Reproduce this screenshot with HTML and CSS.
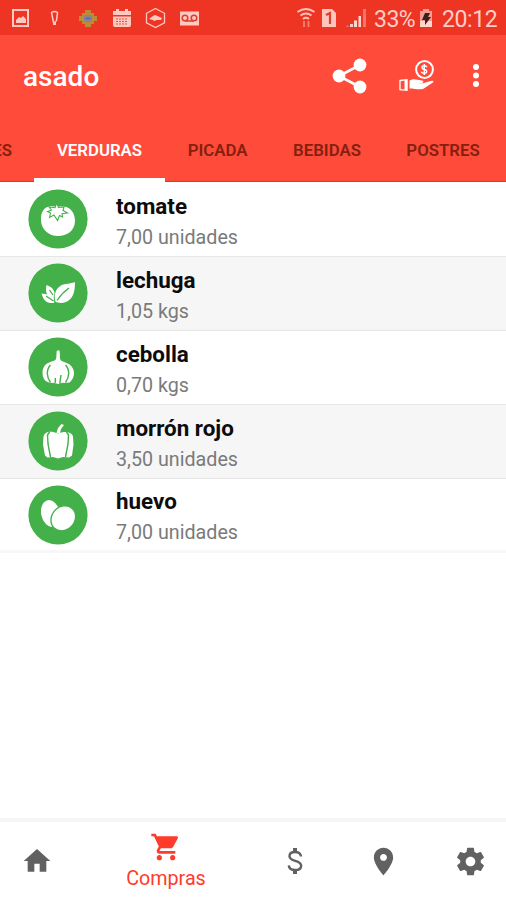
FILE: index.html
```
<!DOCTYPE html>
<html lang="es">
<head>
	<meta charset="UTF-8">
	<title>asado</title>
	<link rel="stylesheet" href="styles.css">
</head>
<body>
	<div class="app">
		<!-- barra de estado -->
		<div class="status">
			<svg class="status-left" width="210" height="35" viewBox="0 0 210 35">
				<g fill="none" stroke="#ffc9c1" stroke-width="2">
					<rect x="13" y="10" width="15" height="16"/>
					<path d="M51.500 12.500q3-2 6 0l-1 8q-1 2-3 2z" stroke-width="1.500"/>
					<path d="M155.500 8.500l9 4.800v9.500l-9 4.800-9-4.800v-9.500z" stroke-width="1.300"/>
				</g>
				<g fill="#ffc9c1">
					<path d="M16 23v-3l3-3 2 1 2-2 3 3v4z"/>
					<path d="M53 22h3v3h-3z"/>
					<path d="M113 11h3v-2h3v2h6v-2h3v2h3v4h-18zM113 16.500h18v8.500q0 2-2 2h-14q-2 0-2-2z"/>
					<path d="M149 19l4-3 2-1 7 3-1 2h-4l-3 1-1-1z"/>
					<rect x="180" y="11.500" width="19" height="14"/>
				</g>
				<path d="M116 19h12M116 21.500h12M116 24h12" stroke="#e8503f" stroke-width="1.200" stroke-dasharray="2 1"/>
				<path d="M85 10h6v3h3v3h3v5h-3v3h-3v3h-6v-3h-3v-3h-3v-5h3v-3h3z" fill="#b98d35"/>
				<rect x="84" y="15" width="8" height="7" rx="2" fill="#8d8290"/>
				<path d="M85.500 18.500h5" stroke="#5369b5" stroke-width="1.500"/>
				<g fill="none" stroke="#e13b2c" stroke-width="1.500">
					<circle cx="185" cy="18" r="2.800"/>
					<circle cx="194" cy="18" r="2.800"/>
					<path d="M185 21h9"/>
				</g>
			</svg>
			<div class="status-right">
				<svg width="72" height="35" viewBox="0 0 72 35">
					<g fill="none" stroke="#ffc4bb" stroke-width="1.800">
						<path d="M1.500 12q8.500-6 17 0M4.500 15.500q5.500-4 11 0M7 19q3-2.500 6 0"/>
						<path d="M8 21v6M12.500 21v6" stroke="#f68171"/>
					</g>
					<path d="M26 9h10l4 4v14h-14z" fill="#ffc4bb"/>
					<path d="M30 15l4-2v11" fill="none" stroke="#d9402f" stroke-width="2.200"/>
					<path d="M54 24h3v3h-3zM58 20.500h3v6.500h-3zM62.500 16h2.500v11h-2.500z" fill="#ffd5ce"/>
					<path d="M50.500 25.500h2v1.500h-2zM67 9h3v18h-3z" fill="#f47767"/>
				</svg>
				<span class="percent">33%</span>
				<svg class="battery" width="14" height="35" viewBox="0 0 14 35">
					<path d="M4 9h6v2h3v16h-12v-16h3z" fill="#f59b8f"/>
					<path d="M1 21h12v6h-12z" fill="#ffd5ce"/>
					<path d="M6 13h5l-2 4h3l-6 8v-5h-3z" fill="#36211e"/>
				</svg>
				<span class="clock">20:12</span>
			</div>
		</div>

		<header class="header">
			<div class="toolbar">
				<h1 class="title">asado</h1>
				<svg class="share" width="36" height="36" viewBox="0 0 36 36" fill="#fff">
					<path d="M28 7L7 18l21 11" fill="none" stroke="#fff" stroke-width="2.600"/>
					<circle cx="28" cy="7" r="6.400"/>
					<circle cx="7" cy="18" r="6.400"/>
					<circle cx="28" cy="29" r="6.400"/>
				</svg>
				<svg class="pay" width="36" height="32" viewBox="0 0 36 32">
					<circle cx="25.500" cy="9.500" r="8.400" fill="none" stroke="#fff" stroke-width="2"/>
					<path d="M28 7q-1-1.500-3-1.300c-3 .3-2.500 3.100 0 3.600 3.500.7 3.500 3.700.3 4-1.500.1-2.500-.4-3-1.500M25.300 4v11" fill="none" stroke="#fff" stroke-width="1.400"/>
					<path d="M1 20.500l7-.8v10.600l-7-.6z" fill="none" stroke="#fff" stroke-width="1.300"/>
					<path d="M5.500 20h2.700v10h-2.700z" fill="#fff"/>
					<path d="M10.500 20.500c3-1.500 5-1.800 8-.7l4.500.7c2 .4 1.800 2.300-.2 2.400h-4.300l5.500.4 8.500-2.500c2-.5 2.600 1 1 2l-7.500 5c-1.500 1-3 1.500-5 1.500-4 0-7-.8-10.500-.8z" fill="#fff"/>
				</svg>
				<svg class="more" width="10" height="26" viewBox="0 0 10 26" fill="#fff">
					<circle cx="5" cy="4" r="3"/>
					<circle cx="5" cy="12.500" r="3"/>
					<circle cx="5" cy="21" r="3"/>
				</svg>
			</div>
			<nav class="tabs">
				<div class="tab tab-prev">ES</div>
				<div class="tab tab-verduras active">VERDURAS</div>
				<div class="tab tab-picada">PICADA</div>
				<div class="tab tab-bebidas">BEBIDAS</div>
				<div class="tab tab-postres">POSTRES</div>
			</nav>
		</header>

		<main class="list">
			<div class="item">
				<svg class="icon" viewBox="0 0 60 60">
					<circle cx="30" cy="30" r="29.600" fill="#43b04a"/>
					<path d="M26 17.500c-9-1.500-13.500 4.500-13 14 .5 9.500 8 15.500 17 15.500s17-5 17-15.500c0-9-6-15-14-14z" fill="#fff"/>
					<path d="M21 18l6 .7 1.500-4.700 2 4.500 5.500-.5-1 3.500 4.500 2.500-5.500.8.500 3.200-3-1.500-2 5-3.500-5.500-4.500 2.500 1-4.500-3-1.500 4-1.500z" fill="#fff" stroke="#43b04a" stroke-width="1.100"/>
				</svg>
				<div class="text">
					<div class="name">tomate</div>
					<div class="amount">7,00 unidades</div>
				</div>
			</div>
			<div class="item gray">
				<svg class="icon" viewBox="0 0 60 60">
					<circle cx="30" cy="30" r="29.600" fill="#43b04a"/>
					<path d="M47 19c0 10-2 17-9 20-4 1.500-8 1-10.500-.2-2-6-.3-13 5.500-16.300 4-2.300 9-1.500 14-3.500z" fill="#fff"/>
					<path d="M18.500 22c4.500 1.500 8 4.500 8 8.500l-.8 3.500.5 6h-3.700c-4.500 0-7.500-4-9-9.500l5.500.8c-1.300-3-1.200-6-.5-9.300z" fill="#fff"/>
					<path d="M29 37.500c4-6 7-9 12-12.500M25.500 38l-7.500-5M25 32l-3.500-5" fill="none" stroke="#43b04a" stroke-width="1.300"/>
				</svg>
				<div class="text">
					<div class="name">lechuga</div>
					<div class="amount">1,05 kgs</div>
				</div>
			</div>
			<div class="item">
				<svg class="icon" viewBox="0 0 60 60">
					<circle cx="30" cy="30" r="29.600" fill="#43b04a"/>
					<path d="M28.700 14q1.500-1.500 3 0l.3 7.500c.5 2.500 2.500 3 5.500 4 5 1.500 8.500 5.500 8.500 10.500 0 4-2 7.500-4.500 9.500l-4.500.5-2.500-.3-4 1.300-4.500-1-4-.3c-5-.8-7.500-4.500-7.500-10 0-6 3.500-9.500 8.500-11 3-1 5-1.500 5.200-3.800z" fill="#fff"/>
					<path d="M22.500 28c-4.500 5-4 12 0 17.500M27 46c.5-1.500.6-3 .3-5M32 47c-.3-3 .5-5 1-9M37.500 28c4.500 5 4 12 0 17.500" fill="none" stroke="#43b04a" stroke-width="1.400"/>
				</svg>
				<div class="text">
					<div class="name">cebolla</div>
					<div class="amount">0,70 kgs</div>
				</div>
			</div>
			<div class="item gray">
				<svg class="icon" viewBox="0 0 60 60">
					<circle cx="30" cy="30" r="29.600" fill="#43b04a"/>
					<path d="M28.500 22l1.500-5 3.500-4 2.500 1-3 4-1 4z" fill="#fff"/>
					<path d="M30 22.500c7-3 14-1.500 15 3l.5 8-1.500 11-3 2-6-.5-5 1.500-5-1.500-5.500.5-2.500-2-2-11 .5-8c1-5 7-6 14.500-3z" fill="#fff"/>
					<path d="M21.500 21l-2 3 .5 9 2.500 13M38.500 21l2 3-.5 9-2.500 13" fill="none" stroke="#43b04a" stroke-width="1.400"/>
				</svg>
				<div class="text">
					<div class="name">morrón rojo</div>
					<div class="amount">3,50 unidades</div>
				</div>
			</div>
			<div class="item">
				<svg class="icon" viewBox="0 0 60 60">
					<circle cx="30" cy="30" r="29.600" fill="#43b04a"/>
					<ellipse cx="22.500" cy="28.500" rx="9.300" ry="13.600" transform="rotate(-12 22.500 28.500)" fill="#fff"/>
					<ellipse cx="35.300" cy="33.300" rx="13.300" ry="11.500" transform="rotate(-48 35.300 33.300)" fill="#fff" stroke="#43b04a" stroke-width="1.400"/>
				</svg>
				<div class="text">
					<div class="name">huevo</div>
					<div class="amount">7,00 unidades</div>
				</div>
			</div>
		</main>

		<!-- menu inferior -->
		<nav class="bottom">
			<div class="link">
				<svg width="32" height="32" viewBox="0 0 24 24"><path d="M10 20v-6h4v6h5v-8h3L12 3 2 12h3v8z"/></svg>
			</div>
			<div class="link selected">
				<svg width="32" height="32" viewBox="0 0 24 24"><path d="M7 18c-1.100 0-1.990.9-1.990 2S5.900 22 7 22s2-.9 2-2-.9-2-2-2zM1 2v2h2l3.600 7.590-1.350 2.450c-.16.28-.25.61-.25.96 0 1.100.9 2 2 2h12v-2H7.420c-.14 0-.25-.11-.25-.25l.03-.12.9-1.630h7.450c.75 0 1.410-.41 1.750-1.030l3.580-6.490c.08-.14.12-.31.12-.48 0-.55-.45-1-1-1H5.210l-.94-2H1zm16 16c-1.100 0-1.990.9-1.990 2s.89 2 1.990 2 2-.9 2-2-.9-2-2-2z"/></svg>
				<span>Compras</span>
			</div>
			<div class="link">
				<svg width="32" height="32" viewBox="0 0 32 32"><path d="M22 11.500c-.3-3-2.500-4.500-6-4.500-3.300 0-5.500 1.500-5.500 4.200 0 6 11.700 3.200 11.700 9.500 0 2.700-2.500 4.300-6 4.300-3.700 0-6.200-1.600-6.400-4.700" fill="none" stroke="#616161" stroke-width="2.400"/><path d="M14 3h4v4h-4zM14 25h4v4h-4z"/></svg>
			</div>
			<div class="link">
				<svg width="33" height="33" viewBox="0 0 24 24"><path d="M12 2C8.130 2 5 5.130 5 9c0 5.250 7 13 7 13s7-7.750 7-13c0-3.870-3.130-7-7-7zm0 9.500c-1.380 0-2.500-1.120-2.500-2.500s1.120-2.500 2.500-2.500 2.500 1.120 2.500 2.500-1.120 2.500-2.500 2.500z"/></svg>
			</div>
			<div class="link link-settings">
				<svg width="33" height="33" viewBox="0 0 24 24"><path d="M19.430 12.980c.04-.32.07-.64.07-.98s-.03-.66-.07-.98l2.110-1.650c.19-.15.24-.42.12-.64l-2-3.460c-.12-.22-.39-.3-.61-.22l-2.490 1c-.52-.4-1.080-.73-1.690-.98l-.38-2.650C14.460 2.180 14.250 2 14 2h-4c-.25 0-.46.18-.49.42l-.38 2.650c-.61.25-1.170.59-1.690.98l-2.490-1c-.23-.09-.49 0-.61.22l-2 3.460c-.13.22-.07.49.12.64l2.110 1.650c-.04.32-.07.65-.07.98s.03.66.07.98l-2.110 1.650c-.19.15-.24.42-.12.64l2 3.460c.12.22.39.3.61.22l2.490-1c.52.4 1.080.73 1.690.98l.38 2.650c.03.24.24.42.49.42h4c.25 0 .46-.18.49-.42l.38-2.650c.61-.25 1.170-.59 1.690-.98l2.490 1c.23.09.49 0 .61-.22l2-3.460c.12-.22.07-.49-.12-.64l-2.110-1.650zM12 15.500c-1.930 0-3.500-1.570-3.500-3.500s1.570-3.500 3.500-3.500 3.500 1.570 3.500 3.500-1.570 3.500-3.500 3.500z"/></svg>
			</div>
		</nav>
	</div>
</body>
</html>
```

FILE: styles.css
```
*{
	box-sizing: border-box;
}
body{
	margin: 0;
	font-family: Roboto, "Liberation Sans", sans-serif;
	background: #fff;
}
svg{
	display: block;
	flex: none;
}
.app{
	display: flex;
	flex-direction: column;
	width: 506px;
	height: 900px;
	overflow: hidden;
}

/* barra de estado */
.status{
	display: flex;
	justify-content: space-between;
	height: 35px;
	flex: none;
	background: #ee3524;
	color: #ffcec7;
}
.status-right{
	display: flex;
	width: 210px;
	line-height: 39px;
	font-size: 23px;
}
.percent{
	width: 44px;
	margin-left: 6px;
	letter-spacing: -0.5px;
}
.battery{
	margin-left: 1px;
	margin-right: 9px;
}
.clock{
	letter-spacing: -0.4px;
}

/* cabecera */
.header{
	height: 147px;
	flex: none;
	background: #ff4b39;
	border-bottom: 1px solid #f0301b;
}
.toolbar{
	display: flex;
	align-items: center;
	height: 81px;
	padding-left: 23px;
}
.title{
	width: 309px;
	margin: 0;
	padding-top: 2px;
	font-size: 28px;
	font-weight: 500;
	color: #fff;
}
.pay{
	margin-left: 31px;
}
.more{
	margin-left: 36px;
}
.tabs{
	display: flex;
	height: 66px;
}
.tab{
	display: flex;
	justify-content: center;
	flex: none;
	height: 66px;
	padding-top: 24px;
	line-height: 20px;
	font-size: 16.800px;
	font-weight: 600;
	color: #84200f;
}
.tab-prev{
	width: 34px;
	justify-content: flex-end;
	padding-right: 22px;
}
.tab-verduras{
	width: 131px;
}
.tab-picada{
	width: 105px;
}
.tab-bebidas{
	width: 114px;
}
.tab-postres{
	width: 118px;
}
.active{
	color: #fff;
	border-bottom: 4px solid #fff;
}

/* lista de compras */
.list{
	flex: 1;
	padding-top: 1px;
}
.item{
	display: flex;
	align-items: center;
	height: 74px;
	padding-left: 28px;
	padding-bottom: 1px;
	border-bottom: 1px solid #e6e6e6;
}
.item:last-child{
	padding-bottom: 0;
	border-bottom: 3px solid #f7f7f7;
}
.gray{
	background: #f6f6f6;
}
.icon{
	width: 60px;
	height: 60px;
}
.text{
	margin-left: 28px;
	padding-top: 5px;
}
.name{
	height: 32px;
	line-height: 28px;
	font-size: 22.400px;
	font-weight: 700;
	color: #0c0c0c;
}
.amount{
	line-height: 28px;
	font-size: 19.700px;
	color: #7a7a7a;
}

/* menu inferior */
.bottom{
	display: flex;
	height: 82px;
	flex: none;
	margin: 0 -9px 0 -7px;
	border-top: 4px solid #f6f6f6;
}
.link{
	display: flex;
	flex-direction: column;
	align-items: center;
	justify-content: center;
	width: 88px;
	fill: #616161;
}
.link-settings{
	width: 86px;
}
.selected{
	width: 170px;
	justify-content: flex-start;
	padding-top: 9px;
	fill: #ff3b2b;
	color: #ff3b2b;
}
.selected span{
	padding-top: 2px;
	line-height: 28px;
	font-size: 19.700px;
}
```
